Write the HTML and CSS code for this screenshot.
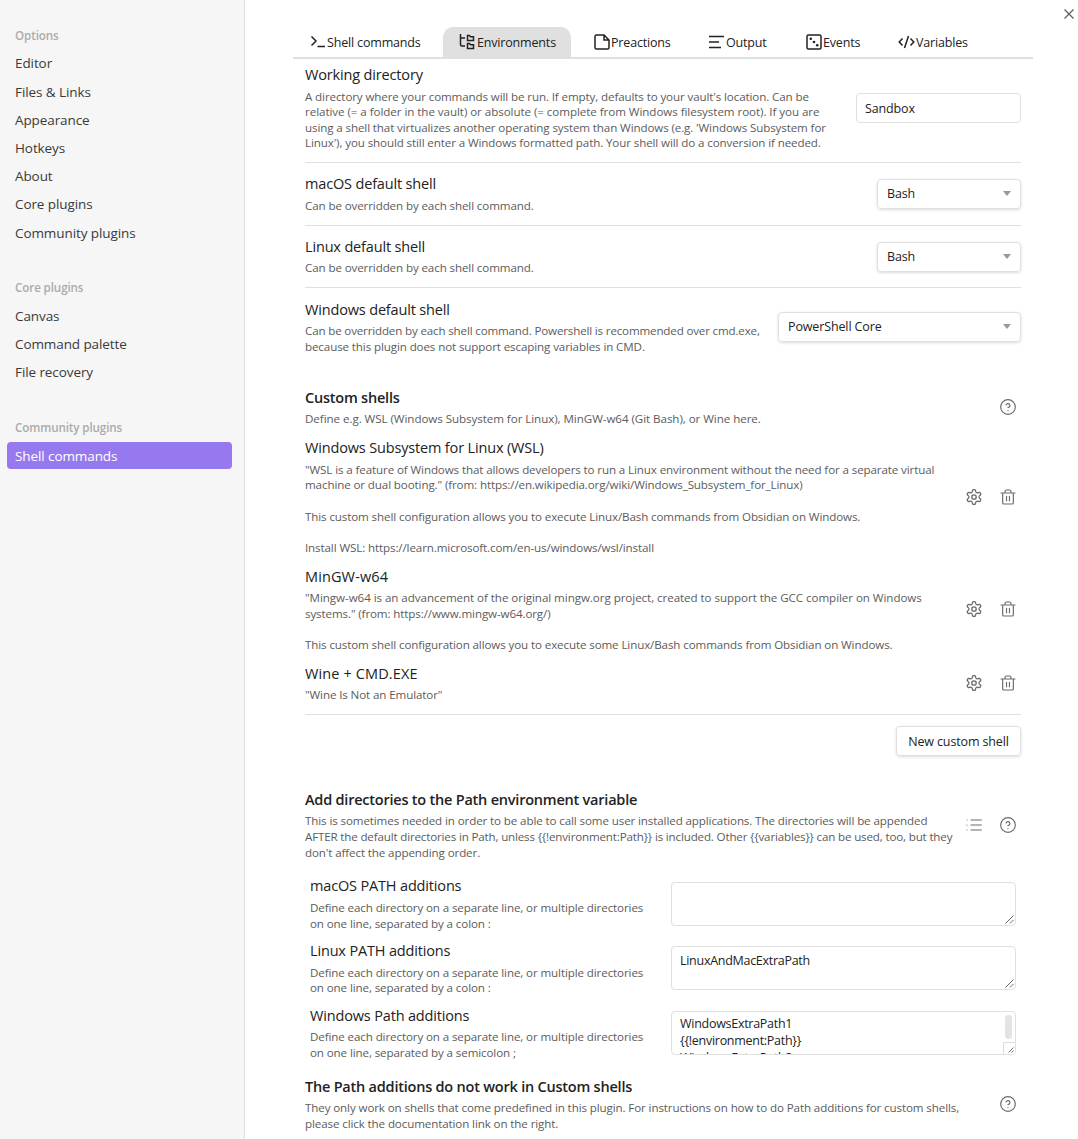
FILE: index.html
```html
<!DOCTYPE html>
<html lang="en">
<head>
<meta charset="utf-8">
<title>Settings</title>
<link rel="stylesheet" href="styles.css">
</head>
<body>
<svg class="defs" width="0" height="0">
  <symbol id="gear" viewBox="1.200 1.200 21.600 21.600"><path d="M12.22 2h-.44a2 2 0 0 0-2 2v.18a2 2 0 0 1-1 1.730l-.43.25a2 2 0 0 1-2 0l-.15-.08a2 2 0 0 0-2.730.73l-.22.38a2 2 0 0 0 .73 2.730l.15.1a2 2 0 0 1 1 1.720v.51a2 2 0 0 1-1 1.740l-.15.09a2 2 0 0 0-.73 2.730l.22.38a2 2 0 0 0 2.730.73l.15-.08a2 2 0 0 1 2 0l.43.25a2 2 0 0 1 1 1.730V20a2 2 0 0 0 2 2h.44a2 2 0 0 0 2-2v-.18a2 2 0 0 1 1-1.730l.43-.25a2 2 0 0 1 2 0l.15.08a2 2 0 0 0 2.730-.73l.22-.39a2 2 0 0 0-.73-2.730l-.15-.08a2 2 0 0 1-1-1.740v-.5a2 2 0 0 1 1-1.740l.15-.09a2 2 0 0 0 .73-2.730l-.22-.38a2 2 0 0 0-2.730-.73l-.15.08a2 2 0 0 1-2 0l-.43-.25a2 2 0 0 1-1-1.730V4a2 2 0 0 0-2-2z"/><circle cx="12" cy="12" r="3"/></symbol>
  <symbol id="trash" viewBox="0 0 24 24"><path d="M1.500 6h21M20 6v14.500a2 2 0 0 1-2 2H6a2 2 0 0 1-2-2V6M7.500 6V4a2.500 2.500 0 0 1 2.500-2.500h4A2.500 2.500 0 0 1 16.500 4v2M9.800 11v6.500M14.200 11v6.500"/></symbol>
  <symbol id="help" viewBox="0 0 24 24"><circle cx="12" cy="12" r="11"/><path d="M9.090 9a3 3 0 0 1 5.830 1c0 2-3 3-3 3M12 17.500h.01"/></symbol>
  <symbol id="list" viewBox="0 0 24 24"><path d="M7.500 4.500H23M7.500 12H23M7.500 19.500H23M1.500 4.500h.01M1.500 12h.01M1.500 19.500h.01"/></symbol>
</svg>
<div class="app">
  <nav class="sidebar">
    <div class="group">
      <div class="group-title">Options</div>
      <a class="item">Editor</a>
      <a class="item">Files &amp; Links</a>
      <a class="item">Appearance</a>
      <a class="item">Hotkeys</a>
      <a class="item">About</a>
      <a class="item">Core plugins</a>
      <a class="item">Community plugins</a>
    </div>
    <div class="group">
      <div class="group-title">Core plugins</div>
      <a class="item">Canvas</a>
      <a class="item">Command palette</a>
      <a class="item">File recovery</a>
    </div>
    <div class="group">
      <div class="group-title">Community plugins</div>
      <a class="item active">Shell commands</a>
    </div>
  </nav>

  <main class="content">
    <div class="topbar">
      <svg class="close" width="10" height="10" viewBox="0 0 10 10"><path d="M.5.5l9 9M9.500.5l-9 9"/></svg>
    </div>
    <div class="panel">
      <div class="tabs">
        <div class="tab tab-shell"><svg width="16" height="16" viewBox="0 0 16 16"><path d="M1.500 2.500L6 7l-4.500 4.500M7.500 12.500H15"/></svg>Shell commands</div>
        <div class="tab tab-env active"><svg width="16" height="16" viewBox="0 0 16 16"><path d="M1.500 0v10.500q0 1.500 1.500 1.500h3M1.500 4H6M8.500 1.500h2l1 1.200h3v3.800h-6zM8.500 9.500h2l1 1.200h3v3.800h-6z"/></svg>Environments</div>
        <div class="tab tab-pre"><svg width="16" height="16" viewBox="0 0 16 16"><path d="M10 1H2.500Q1 1 1 2.500v11Q1 15 2.500 15h11q1.500 0 1.500-1.500V6zM10 1v5h5"/></svg>Preactions</div>
        <div class="tab tab-out"><svg width="16" height="16" viewBox="0 0 16 16"><path d="M0 2.500h15M0 8h10M0 13.500h12"/></svg>Output</div>
        <div class="tab tab-events"><svg width="16" height="16" viewBox="0 0 16 16"><rect x="1" y="1" width="14" height="14" rx="1.500"/><g class="pips"><circle cx="4.800" cy="4.800" r="1.300"/><circle cx="8" cy="8" r="1.300"/><circle cx="11.200" cy="11.200" r="1.300"/></g></svg>Events</div>
        <div class="tab tab-vars"><svg width="17" height="16" viewBox="0 0 17 16"><path d="M4.500 4.500L1.200 8l3.300 3.500M12.500 4.500L15.800 8l-3.300 3.500M10.500 2l-4 12"/></svg>Variables</div>
      </div>

      <section class="settings">
        <div class="setting first">
          <div class="info">
            <div class="name">Working directory</div>
            <div class="desc">A directory where your commands will be run. If empty, defaults to your vault's location. Can be<br><span class="loose">relative (= a folder in the vault) or absolute (= complete from Windows filesystem root). If you are</span><br>using a shell that virtualizes another operating system than Windows (e.g. 'Windows Subsystem for<br>Linux'), you should still enter a Windows formatted path. Your shell will do a conversion if needed.</div>
          </div>
          <div class="field">Sandbox</div>
        </div>
        <div class="setting">
          <div class="info">
            <div class="name">macOS default shell</div>
            <div class="desc">Can be overridden by each shell command.</div>
          </div>
          <div class="select">Bash</div>
        </div>
        <div class="setting">
          <div class="info">
            <div class="name">Linux default shell</div>
            <div class="desc">Can be overridden by each shell command.</div>
          </div>
          <div class="select">Bash</div>
        </div>
        <div class="setting">
          <div class="info">
            <div class="name">Windows default shell</div>
            <div class="desc"><span class="tight">Can be overridden by each shell command. Powershell is recommended over cmd.exe,</span><br>because this plugin does not support escaping variables in CMD.</div>
          </div>
          <div class="select wide">PowerShell Core</div>
        </div>

        <div class="setting heading">
          <div class="info">
            <div class="name">Custom shells</div>
            <div class="desc"><span class="loose">Define e.g. WSL (Windows Subsystem for Linux), MinGW-w64 (Git Bash), or Wine here.</span></div>
          </div>
          <div class="actions"><svg><use href="#help"/></svg></div>
        </div>
        <div class="setting plain">
          <div class="info">
            <div class="name">Windows Subsystem for Linux (WSL)</div>
            <div class="desc">"WSL is a feature of Windows that allows developers to run a Linux environment without the need for a separate virtual<br>machine or dual booting." (from: https://en.wikipedia.org/wiki/Windows_Subsystem_for_Linux)<br><br>This custom shell configuration allows you to execute Linux/Bash commands from Obsidian on Windows.<br><br>Install WSL: https://learn.microsoft.com/en-us/windows/wsl/install</div>
          </div>
          <div class="actions"><svg><use href="#gear"/></svg><svg><use href="#trash"/></svg></div>
        </div>
        <div class="setting plain">
          <div class="info">
            <div class="name wider">MinGW-w64</div>
            <div class="desc"><span class="loose">"Mingw-w64 is an advancement of the original mingw.org project, created to support the GCC compiler on Windows</span><br>systems." (from: https://www.mingw-w64.org/)<br><br>This custom shell configuration allows you to execute some Linux/Bash commands from Obsidian on Windows.</div>
          </div>
          <div class="actions"><svg><use href="#gear"/></svg><svg><use href="#trash"/></svg></div>
        </div>
        <div class="setting plain">
          <div class="info">
            <div class="name wider">Wine + CMD.EXE</div>
            <div class="desc">"Wine Is Not an Emulator"</div>
          </div>
          <div class="actions"><svg><use href="#gear"/></svg><svg><use href="#trash"/></svg></div>
        </div>
        <div class="setting end">
          <div class="button">New custom shell</div>
        </div>

        <div class="setting heading">
          <div class="info">
            <div class="name">Add directories to the Path environment variable</div>
            <div class="desc">This is sometimes needed in order to be able to call some user installed applications. The directories will be appended<br><span class="tight">AFTER the default directories in Path, unless {{!environment:Path}} is included. Other {{variables}} can be used, too, but they</span><br>don't affect the appending order.</div>
          </div>
          <div class="actions"><svg><use href="#list"/></svg><svg><use href="#help"/></svg></div>
        </div>
        <div class="paths">
          <div class="path">
            <div class="info">
              <div class="name">macOS PATH additions</div>
              <div class="desc">Define each directory on a separate line, or multiple directories<br>on one line, separated by a colon :</div>
            </div>
            <div class="area"><svg class="grip" width="9" height="9" viewBox="0 0 9 9"><path d="M.5 8.500l8-8M5 8.500L8.500 5"/></svg></div>
          </div>
          <div class="path">
            <div class="info">
              <div class="name">Linux PATH additions</div>
              <div class="desc">Define each directory on a separate line, or multiple directories<br>on one line, separated by a colon :</div>
            </div>
            <div class="area">LinuxAndMacExtraPath<svg class="grip" width="9" height="9" viewBox="0 0 9 9"><path d="M.5 8.500l8-8M5 8.500L8.500 5"/></svg></div>
          </div>
          <div class="path">
            <div class="info">
              <div class="name">Windows Path additions</div>
              <div class="desc">Define each directory on a separate line, or multiple directories<br>on one line, separated by a semicolon ;</div>
            </div>
            <div class="area scrolls">WindowsExtraPath1<br>{{!environment:Path}}<br>WindowsExtraPath2<i class="thumb"></i><i class="corner"><svg class="grip" width="6" height="6" viewBox="0 0 6 6"><path d="M.5 5.500l5-5M3.500 5.500l2-2"/></svg></i></div>
          </div>
        </div>
        <div class="setting heading last">
          <div class="info">
            <div class="name">The Path additions do not work in Custom shells</div>
            <div class="desc">They only work on shells that come predefined in this plugin. For instructions on how to do Path additions for custom shells,<br>please click the documentation link on the right.</div>
          </div>
          <div class="actions"><svg><use href="#help"/></svg></div>
        </div>
      </section>
    </div>
  </main>
</div>
</body>
</html>
```
FILE: styles.css
```css
* { box-sizing: border-box; }
body {
  margin: 0;
  height: 1139px;
  overflow: hidden;
  background: #fff;
  color: #222;
  font-family: "Open Sans", sans-serif;
}
.defs { display: block; }
.app { display: flex; height: 1139px; overflow: hidden; }

.sidebar {
  flex: none;
  width: 245px;
  padding: 21px 12px 0 7px;
  background: #f6f6f6;
  border-right: 1px solid #e0e0e0;
}
.group { margin-bottom: 26.800px; }
.group-title, .item {
  display: flex;
  align-items: center;
  height: 28.220px;
  padding-left: 8px;
}
.group-title { font-size: 11.600px; font-weight: 600; letter-spacing: -.1px; color: #ababab; }
.item { font-size: 13.500px; letter-spacing: -.09px; color: #3a3a3a; }
.item.active { height: 27px; margin-top: 1px; border-radius: 4px; background: #9679ef; color: #fff; }

.content { flex: 1; min-width: 0; }
.topbar { display: flex; justify-content: flex-end; height: 27px; padding: 9px 4px 0 0; }
.close { stroke: #5c5c5c; fill: none; stroke-width: 1.200; }
.panel { margin-left: 48px; width: 740px; }
.tabs { display: flex; height: 32px; border-bottom: 2px solid #e0e0e0; }
.tab {
  display: flex;
  align-items: center;
  gap: 1px;
  height: 30px;
  white-space: nowrap;
  font-size: 12.500px;
  letter-spacing: -.17px;
}
.tab svg { flex: none; fill: none; stroke: #222; stroke-width: 1.500; }
.tab .pips { fill: #222; stroke: none; }
.tab-shell { width: 150px; padding-left: 17px; }
.tab-env { width: 128px; padding-left: 16px; gap: 2px; }
.tab.active { background: #e0e0e0; border-radius: 10px 10px 0 0; }
.tab-pre { width: 115px; padding-left: 23px; }
.tab-out { width: 97px; padding-left: 23px; }
.tab-events { width: 93px; padding-left: 23px; }
.tab-vars { padding-left: 22px; }

.settings { padding: 0 12px; }
.setting { display: flex; align-items: center; padding: 11.250px 0; border-top: 1px solid #e0e0e0; }
.setting.first { padding-top: 6px; border-top: 0; }
.setting.plain { padding-top: 0; border-top: 0; }
.setting.heading { margin-top: 22.400px; padding-top: 0; border-top: 0; }
.setting.heading.last { margin-top: 11px; }
.setting.end { justify-content: flex-end; }
.info { flex: 1; min-width: 0; white-space: nowrap; }
.name { margin-bottom: 4px; font-size: 14.500px; line-height: 19.500px; letter-spacing: -.16px; }
.name.wider { letter-spacing: .12px; }
.heading .name { font-weight: 600; letter-spacing: -.22px; }
.desc { min-height: 15.600px; font-size: 11.600px; line-height: 15.600px; letter-spacing: -.115px; color: #5c5c5c; }
.loose { letter-spacing: -.06px; }
.tight { letter-spacing: -.165px; }

.field, .select, .button {
  display: flex;
  align-items: center;
  height: 30px;
  border: 1px solid #e0e0e0;
  border-radius: 4px;
  font-size: 12.500px;
  letter-spacing: -.13px;
}
.field { width: 165px; padding: 1px 0 0 8px; }
.select { width: 144px; padding: 0 9px 1px; justify-content: space-between; box-shadow: 0 1px 3px rgba(0, 0, 0, .14); }
.select.wide { width: 243px; }
.select::after { content: ""; border: 4.500px solid transparent; border-top: 5px solid #999; border-bottom: 0; }
.button { width: 125px; padding-top: 1px; justify-content: center; box-shadow: 0 1px 3px rgba(0, 0, 0, .14); }
.actions { display: flex; gap: 18px; padding-right: 5px; }
.actions svg { width: 16px; height: 16px; fill: none; stroke: #6b6b6b; stroke-width: 1.750; stroke-linecap: round; stroke-linejoin: round; overflow: visible; }

.paths { padding: 5px; }
.path { display: flex; align-items: center; height: 54.700px; }
.path + .path { margin-top: 10px; }
.area {
  position: relative;
  width: 345px;
  height: 44px;
  padding: 5px 8px;
  overflow: hidden;
  border: 1px solid #e0e0e0;
  border-radius: 4px;
  font-size: 12.500px;
  line-height: 17px;
  letter-spacing: -.28px;
}
.area.scrolls { padding-top: 4px; line-height: 16.800px; }
.grip { position: absolute; right: 1px; bottom: 1px; stroke: #444; stroke-width: .8; fill: none; }
.thumb { position: absolute; top: 3px; right: 3px; width: 7px; height: 24px; border-radius: 4px; background: #e3e3e3; }
.corner { position: absolute; right: 0; bottom: 0; width: 12px; height: 12px; border: solid #ddd; border-width: 1px 0 0 1px; background: #fff; }
```
